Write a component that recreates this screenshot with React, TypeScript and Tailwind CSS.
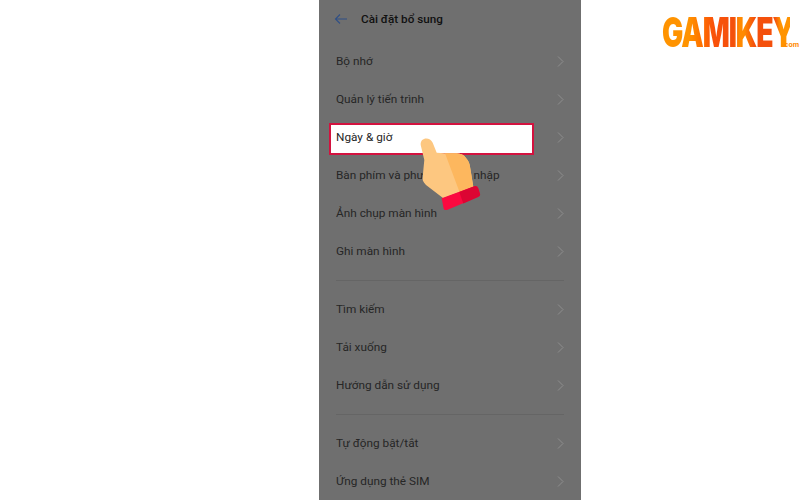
const group1 = ["Bộ nhớ", "Quản lý tiến trình", "Ngày & giờ", "Bàn phím và phương thức nhập", "Ảnh chụp màn hình", "Ghi màn hình"];
const group2 = ["Tìm kiếm", "Tải xuống", "Hướng dẫn sử dụng"];
const group3 = ["Tự động bật/tắt", "Ứng dụng thẻ SIM"];

function Row({ label, highlighted }: { label: string; highlighted?: boolean }) {
  return (
    <div className="relative flex h-[38px] items-center justify-between pl-[17px] pr-[17px]">
      {highlighted && (
        <div className="absolute left-[10px] top-[5px] h-[32px] w-[205px] border-2 border-[#d3123f] bg-white" />
      )}
      <span className="relative pt-px text-[11.8px] text-[#262626]">{label}</span>
      <svg width="7" height="11" viewBox="0 0 7 11" fill="none" className="relative">
        <path d="M1 0.5 L6 5.5 L1 10.5" stroke="#8e8e8e" strokeWidth="1" />
      </svg>
    </div>
  );
}

function Divider() {
  return <div className="mx-[17px] mt-[10px] mb-[9px] h-px bg-[#656565]" />;
}

function Hand() {
  return (
    <svg className="absolute left-[100px] top-[135px]" width="65" height="80" viewBox="419 135 65 80">
      <path
        d="M420.7 145 C420 137 430 136.5 432.7 142.7 L436.7 152.7 L445 153.3 L456.7 153.3 C461 154 464 155 465 156.7 C468 160 469.5 163 470 166.7 L473.3 186.7 L443.3 198.3 L426 185 C423 182 422 179 422.7 176.7 L424.3 160 Z"
        fill="#fdc780"
      />
      <path d="M445 153.3 L456.7 153.3 C461 154 464 155 465 156.7 C468 160 469.5 163 470 166.7 L473.3 186.7 L459.5 192 Z" fill="#fdb75e" />
      <path d="M441.7 198.3 L475 186 C477 186 478 187 478.5 189 L480 194 C480.3 195 480 196 478 197 L447 210 C445 210.3 444 210 443.5 208 Z" fill="#fb0a40" />
      <path d="M459.3 192 L475 186 C477 186 478 187 478.5 189 L480 194 C480.3 195 480 196 478 197 L463.3 203.5 Z" fill="#dc0533" />
    </svg>
  );
}

export default function App() {
  return (
    <div className="flex h-[500px] w-[800px] overflow-hidden bg-white font-['Roboto',sans-serif]">
      <div className="w-[319px] shrink-0" />
      <div className="relative h-[500px] w-[262px] shrink-0 overflow-hidden bg-[#6f6f6f]">
        <div className="flex h-[38px] items-center pl-[15px]">
          <svg width="14" height="12" viewBox="0 0 14 12" fill="none">
            <path d="M13 6 H1.5 M6 1.5 L1.5 6 L6 10.5" stroke="#2f4f86" strokeWidth="1.1" />
          </svg>
          <span className="ml-[13px] pt-px text-[11.7px] font-medium text-[#111111]">Cài đặt bổ sung</span>
        </div>
        <div className="h-[4px]" />
        {group1.map((l) => (
          <Row key={l} label={l} highlighted={l === "Ngày & giờ"} />
        ))}
        <Divider />
        {group2.map((l) => (
          <Row key={l} label={l} />
        ))}
        <Divider />
        {group3.map((l) => (
          <Row key={l} label={l} />
        ))}
        <Hand />
      </div>
      <div className="relative flex-1 pl-[81px] pt-[17px]">
        <div className="h-[30px] w-[128px]">
          <span className="block w-[186px] origin-left scale-x-[0.69] whitespace-nowrap bg-[linear-gradient(90deg,#ff9300_0%,#ff9300_21%,#ff7400_30%,#f9520a_40%,#f4500c_56%,#ff8a00_60%,#ff8a00_64%,#f4500c_72%,#f4500c_88%,#ff9300_92%,#ff9300_100%)] bg-clip-text font-['Inter',sans-serif] text-[41px] leading-[30px] font-black tracking-[-1.5px] text-transparent">
            GAMIKEY
          </span>
        </div>
        <span className="absolute left-[201px] top-[41px] font-['Inter',sans-serif] text-[7px] leading-[7px] font-bold text-[#ff8a00]">.com</span>
      </div>
    </div>
  );
}
